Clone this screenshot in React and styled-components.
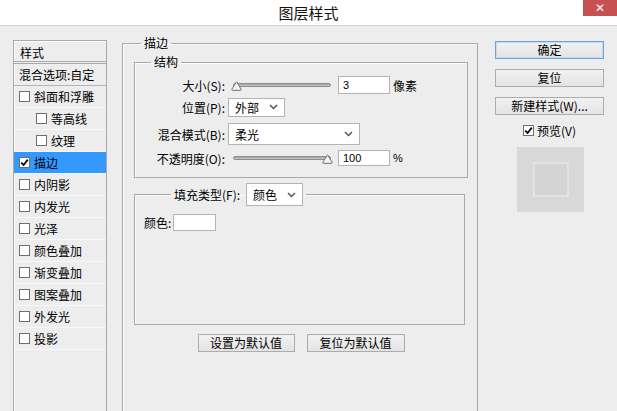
import React from "react";
import styled, { createGlobalStyle } from "styled-components";

const GlobalStyle = createGlobalStyle`
  html, body {
    margin: 0;
    padding: 0;
    background: #ededed;
  }
  * {
    box-sizing: border-box;
  }
`;

const Dialog = styled.div`
  width: 617px;
  height: 411px;
  overflow: hidden;
  background: #ededed;
  font-family: "Noto Sans CJK SC", "Liberation Sans", sans-serif;
  font-size: 12px;
  color: #000;
  display: flex;
  flex-direction: column;
`;

const TitleBar = styled.div`
  height: 26px;
  flex-shrink: 0;
  background: #fff;
  border-bottom: 1px solid #d6d6d6;
  display: grid;
  grid-template-columns: 1fr auto 1fr;
`;

const Title = styled.div`
  grid-column: 2;
  font-size: 15px;
  line-height: 25px;
  color: #111;
`;

const CloseButton = styled.div`
  grid-column: 3;
  justify-self: end;
  width: 34px;
  height: 16px;
  background: #c75050;
  color: #fff;
  font-family: "DejaVu Sans", sans-serif;
  font-size: 12px;
  font-weight: bold;
  line-height: 16px;
  text-align: center;
`;

const Body = styled.div`
  flex: 1;
  display: flex;
  align-items: flex-start;
  padding: 14px 0 0 13px;
`;

/* ---------- left list ---------- */

const StyleList = styled.div`
  width: 94px;
  height: 400px;
  border: 1px solid #a9a9a9;
  box-shadow: inset 1px 1px 0 #fff;
  display: flex;
  flex-direction: column;
`;

const ListHeader = styled.div`
  height: 23px;
  padding: 3px 0 0 6px;
  border-bottom: 3px double #a9a9a9;
`;

const ListRow = styled.div`
  height: 22px;
  display: flex;
  align-items: center;
  gap: 4px;
  padding-left: ${(p) => (p.$indent ? 22 : 5)}px;
  background: ${(p) => (p.$active ? "#3399ff" : "transparent")};
  border-bottom: 1px solid ${(p) => (p.$dark ? "#b4b4b4" : "#f8f8f8")};
  white-space: nowrap;
`;

const Box = styled.span`
  width: 11px;
  height: 11px;
  flex-shrink: 0;
  background: #fff;
  border: 1px solid #6f6f6f;
  display: flex;
  align-items: center;
  justify-content: center;
`;

const Check = ({ on }) => (
  <Box>
    {on && (
      <svg width="9" height="9" viewBox="0 0 9 9">
        <path d="M1.2 4.6 L3.6 7 L7.8 1.6" fill="none" stroke="#000" strokeWidth="1.8" />
      </svg>
    )}
  </Box>
);

/* ---------- main group ---------- */

const Group = styled.fieldset`
  margin: 0;
  padding: 0;
  min-width: 0;
  border: 1px solid #a9a9a9;
  box-shadow: inset 1px 1px 0 #fafafa;
`;

const MainGroup = styled(Group)`
  margin: -4px 0 0 15px;
  width: 356px;
  height: 420px;
  border-bottom: none;
  padding: 0 9px 0 11px;
`;

const Legend = styled.legend`
  margin-left: ${(p) => p.$offset}px;
  padding: 0 3px;
  line-height: 14px;
  display: flex;
  align-items: center;
  gap: 6px;
`;

const StructureGroup = styled(Group)`
  margin-top: 5px;
  padding: 7px 0 11px 0;
  display: flex;
  flex-direction: column;
`;

const FormRow = styled.div`
  height: ${(p) => p.$h}px;
  margin-top: ${(p) => p.$mt || 0}px;
  display: flex;
  align-items: center;
`;

const Label = styled.span`
  width: 90px;
  text-align: right;
  white-space: nowrap;
  margin-right: 3px;
`;

const Slider = styled.div`
  width: 100px;
  height: 11px;
  position: relative;
  margin-left: 3px;
`;

const Track = styled.div`
  position: absolute;
  left: 2px;
  right: 0;
  top: 3px;
  height: 4px;
  border-radius: 2px;
  background: linear-gradient(#a0a0a0, #c8c8c8);
  border: 1px solid #8f8f8f;
`;

const Thumb = styled.svg`
  position: absolute;
  top: 1px;
  left: ${(p) => (p.$end ? 91 : 0)}px;
`;

const SliderControl = ({ end }) => (
  <Slider>
    <Track />
    <Thumb $end={end} width="11" height="10" viewBox="0 0 11 10">
      <path d="M5.5 0.8 L10.2 8.3 Q10.4 9.3 9.4 9.3 L1.6 9.3 Q0.6 9.3 0.8 8.3 Z" fill="#f4f4f4" stroke="#6f6f6f" />
    </Thumb>
  </Slider>
);

const NumberBox = styled.div`
  width: 52px;
  height: ${(p) => p.$h || 18}px;
  margin-left: 7px;
  background: #fff;
  border: 1px solid #b4b4b4;
  padding-left: 4px;
  font-family: "Liberation Sans", sans-serif;
  font-size: 11px;
  display: flex;
  align-items: center;
`;

const Suffix = styled.span`
  margin-left: 3px;
  font-size: ${(p) => (p.$latin ? 11 : 12)}px;
  font-family: ${(p) => (p.$latin ? '"Liberation Sans", sans-serif' : "inherit")};
`;

const Select = styled.div`
  width: ${(p) => p.$w}px;
  height: ${(p) => p.$h}px;
  background: #fff;
  border: 1px solid #b4b4b4;
  display: flex;
  align-items: center;
  justify-content: space-between;
  padding: 0 6px 0 6px;
`;

const Chevron = () => (
  <svg width="9" height="6" viewBox="0 0 9 6">
    <path d="M1 1 L4.5 4.5 L8 1" fill="none" stroke="#555" strokeWidth="1.5" />
  </svg>
);

const FillGroup = styled(Group)`
  margin: 5px 3px 0 0;
  height: 142px;
  padding: 8px 0 0 9px;
`;

const ColorRow = styled.div`
  display: flex;
  align-items: center;
  gap: 2px;
`;

const Swatch = styled.div`
  width: 43px;
  height: 17px;
  background: #fff;
  border: 1px solid #b4b4b4;
`;

const ButtonRow = styled.div`
  display: flex;
  justify-content: center;
  gap: 12px;
  margin-top: 9px;
`;

const Button = styled.div`
  width: ${(p) => p.$w || 109}px;
  height: 18px;
  border: 1px solid ${(p) => (p.$primary ? "#6da3d8" : "#acacac")};
  background: linear-gradient(#f2f2f2, #e3e3e3);
  box-shadow: ${(p) => (p.$primary ? "inset 0 0 0 1px #c4dcf2" : "none")};
  display: flex;
  align-items: center;
  justify-content: center;
  line-height: 1;
  white-space: nowrap;
`;

/* ---------- right column ---------- */

const SideColumn = styled.div`
  width: 109px;
  margin-left: 17px;
  padding-top: 1px;
  display: flex;
  flex-direction: column;
  align-items: center;
  gap: 10px;
`;

const PreviewToggle = styled.label`
  display: flex;
  align-items: center;
  gap: 3px;
  margin-top: -3px;
`;

const PreviewSwatch = styled.div`
  width: 67px;
  height: 65px;
  margin-top: -2px;
  margin-left: 2px;
  background: #d8d8d8;
  display: flex;
  align-items: center;
  justify-content: center;
`;

const PreviewInner = styled.div`
  width: 36px;
  height: 35px;
  background: #d4d4d4;
  border: 2px solid #e2e2e2;
`;

const styleItems = [
  { name: "斜面和浮雕" },
  { name: "等高线", indent: true },
  { name: "纹理", indent: true },
  { name: "描边", on: true },
  { name: "内阴影" },
  { name: "内发光" },
  { name: "光泽" },
  { name: "颜色叠加" },
  { name: "渐变叠加" },
  { name: "图案叠加" },
  { name: "外发光" },
  { name: "投影" },
];

export default function App() {
  return (
    <Dialog>
      <GlobalStyle />
      <TitleBar>
        <Title>图层样式</Title>
        <CloseButton>✕</CloseButton>
      </TitleBar>

      <Body>
        <StyleList>
          <ListHeader>样式</ListHeader>
          <ListRow $dark>混合选项:自定</ListRow>
          {styleItems.map((item) => (
            <ListRow key={item.name} $indent={item.indent} $active={item.on}>
              <Check on={item.on} />
              {item.name}
            </ListRow>
          ))}
        </StyleList>

        <MainGroup>
          <Legend $offset={7}>描边</Legend>

          <StructureGroup>
            <Legend $offset={16}>结构</Legend>
            <FormRow $h={18}>
              <Label>大小(S):</Label>
              <SliderControl />
              <NumberBox>3</NumberBox>
              <Suffix>像素</Suffix>
            </FormRow>
            <FormRow $h={18} $mt={4}>
              <Label>位置(P):</Label>
              <Select $w={57} $h={19}>
                外部
                <Chevron />
              </Select>
            </FormRow>
            <FormRow $h={22} $mt={7}>
              <Label>混合模式(B):</Label>
              <Select $w={132} $h={22}>
                柔光
                <Chevron />
              </Select>
            </FormRow>
            <FormRow $h={16} $mt={5}>
              <Label>不透明度(O):</Label>
              <SliderControl end />
              <NumberBox $h={16}>100</NumberBox>
              <Suffix $latin>%</Suffix>
            </FormRow>
          </StructureGroup>

          <FillGroup>
            <Legend $offset={27}>
              填充类型(F):
              <Select $w={57} $h={23}>
                颜色
                <Chevron />
              </Select>
            </Legend>
            <ColorRow>
              颜色:
              <Swatch />
            </ColorRow>
          </FillGroup>

          <ButtonRow>
            <Button $w={97}>设置为默认值</Button>
            <Button $w={98}>复位为默认值</Button>
          </ButtonRow>
        </MainGroup>

        <SideColumn>
          <Button $primary>确定</Button>
          <Button>复位</Button>
          <Button>新建样式(W)...</Button>
          <PreviewToggle>
            <Check on />
            预览(V)
          </PreviewToggle>
          <PreviewSwatch>
            <PreviewInner />
          </PreviewSwatch>
        </SideColumn>
      </Body>
    </Dialog>
  );
}
